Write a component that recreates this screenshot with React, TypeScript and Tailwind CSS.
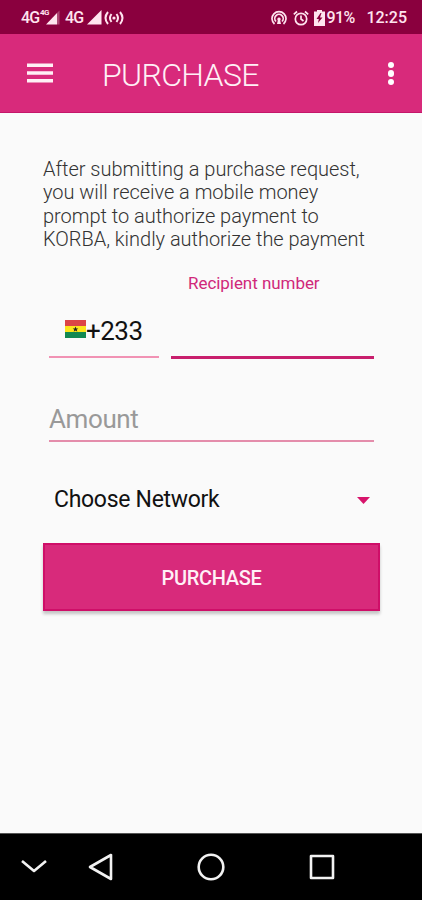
import type { ReactNode } from 'react';

const paragraph = [
  'After submitting a purchase request,',
  'you will receive a mobile money',
  'prompt to authorize payment to',
  'KORBA, kindly authorize the payment',
];

function StatusBar() {
  return (
    <div className="flex h-[34px] items-center justify-between bg-[#8a003e] pr-[15px] pl-[21px] text-[16px] leading-[18px] font-medium text-[#ffe4ef]">
      <div className="flex items-center pt-px">
        <span className="w-[19px] tracking-[-0.8px]">4G</span>
        <span className="w-[5px] self-start text-[8px] leading-[8px] font-bold tracking-[-0.5px] whitespace-nowrap">4G</span>
        <svg className="h-[15px] w-[15px]" viewBox="0 0 15 15" fill="currentColor">
          <path d="M1 14.5 12 3v11.500Z" />
          <path d="M12 3 14.500.5v14H12Z" opacity=".3" />
        </svg>
        <span className="ml-[5px] w-[21px] tracking-[-0.8px]">4G</span>
        <svg className="h-[15px] w-[16px]" viewBox="0 0 16 15" fill="currentColor">
          <path d="M1 14.500 15.500 0v14.500Z" />
        </svg>
        <svg className="ml-[2px] h-[14px] w-[20px]" viewBox="0 0 20 14" fill="none" stroke="currentColor" strokeWidth="2">
          <path d="M4 1Q-1 7 4 13M7.500 3Q4.500 7 7.500 11M16 1q5 6 0 12M12.500 3q3 4 0 8" />
          <circle cx="10" cy="7" r="1.600" fill="currentColor" stroke="none" />
        </svg>
      </div>

      <div className="flex items-center pt-px">
        <svg className="h-4 w-4" viewBox="0 0 16 16" fill="none" stroke="currentColor" strokeWidth="1.700">
          <path d="M3.500 14A7 7 0 1 1 12.500 14M5 11.500a4.200 4.200 0 1 1 6 0" />
          <path d="M8 7.500a1.700 1.700 0 0 1 1.200 2.900L10 14H6l.8-3.600A1.700 1.700 0 0 1 8 7.500Z" fill="currentColor" stroke="none" />
        </svg>
        <svg className="ml-[6px] h-4 w-4" viewBox="0 0 16 16" fill="none" stroke="currentColor" strokeWidth="1.700">
          <circle cx="8" cy="9" r="5.700" />
          <path d="M8 5.500V9l2.500 2M.8 4.300 4 1.500M15.200 4.300 12 1.500" />
        </svg>
        <svg className="ml-[5px] h-4 w-[11px]" viewBox="0 0 11 16">
          <path d="M0 1.500h3V0h5v1.500h3V16H0Z" fill="currentColor" />
          <path d="M6.500 3 2.500 9h2.300L4 13l4.500-5.500H6L7.500 3Z" fill="#8a003e" />
        </svg>
        <span className="ml-px w-[31px] tracking-[-0.5px]">91%</span>
        <span className="ml-[9px]">12:25</span>
      </div>
    </div>
  );
}

function AppBar() {
  return (
    <header className="flex h-[79px] items-center border-b border-[#c4166a] bg-[#d82a7b] pr-[28px] pl-[27px]">
      <svg className="h-5 w-[26px]" viewBox="0 0 26 20" fill="#fff0f6">
        <path d="M0 .5h26V4H0ZM0 8.200h26v3.500H0ZM0 16h26v3.500H0Z" />
      </svg>
      <h1 className="ml-[49px] pt-[3px] text-[32px] leading-[38px] font-light tracking-[-0.65px] text-[#fff0f6]">PURCHASE</h1>
      <div className="ml-auto flex flex-col gap-[2px] pt-px">
        <span className="size-[6.500px] rounded-full bg-white" />
        <span className="size-[6.500px] rounded-full bg-white" />
        <span className="size-[6.500px] rounded-full bg-white" />
      </div>
    </header>
  );
}

function GhanaFlag() {
  return (
    <svg className="h-[18px] w-[21px]" viewBox="0 0 21 18">
      <rect width="21" height="6" fill="#dc4547" />
      <rect y="6" width="21" height="6" fill="#fce51c" />
      <rect y="12" width="21" height="6" fill="#128951" />
      <path d="m10.500 6.500.8 1.900h2l-1.600 1.300.6 2-1.800-1.200-1.800 1.200.6-2-1.600-1.300h2Z" fill="#222" />
    </svg>
  );
}

function NavIcon({ className, children }: { className: string; children: ReactNode }) {
  return (
    <svg className={className} viewBox="0 0 28 28" fill="none" stroke="#f2f2f2" strokeWidth="2.600" strokeLinejoin="round">
      {children}
    </svg>
  );
}

export default function App() {
  return (
    <div className="flex h-[900px] w-[422px] flex-col overflow-hidden bg-[#fafafa] font-['Roboto',sans-serif]">
      <StatusBar />
      <AppBar />

      <main className="flex flex-1 flex-col pr-[42px] pl-[43px]">
        <p className="mt-[45px] text-[20px] leading-[23.300px] font-light tracking-[-0.03px] whitespace-nowrap text-[#333]">
          {paragraph.map((line) => (
            <span key={line} className="block">{line}</span>
          ))}
        </p>

        {/* Phone number */}
        <div className="mt-[21px] flex h-[87px] items-end px-[6px]">
          <div className="mb-px flex h-[38px] w-[110px] items-start border-b-2 border-[#f192b4] pl-[16px]">
            <GhanaFlag />
            <span className="text-[26px] leading-[22px] tracking-[-0.5px] text-[#111]">+233</span>
          </div>
          <div className="ml-[12px] h-full flex-1 border-b-[3px] border-[#c81f6d] pl-[17px]">
            <label className="text-[17px] leading-[20px] tracking-[-0.05px] whitespace-nowrap text-[#d0287a]">Recipient number</label>
          </div>
        </div>

        {/* Amount */}
        <div className="mx-[6px] mt-[43px] h-[40px] border-b-2 border-[#e48dab] text-[26px] leading-[35px] tracking-[-0.4px] text-[#999]">
          Amount
        </div>

        {/* Network select */}
        <div className="mt-[42px] flex h-[32px] items-center justify-between pr-[10px] pl-[11px] text-[23px] tracking-[-0.3px] text-[#111]">
          <span>Choose Network</span>
          <svg className="h-[7px] w-[13px]" viewBox="0 0 13 7">
            <path d="M0 0h13L6.500 7Z" fill="#d7146b" />
          </svg>
        </div>

        <button className="mt-[27px] h-[68px] border-2 border-[#cf0e68] bg-[#d82a7b] pt-[2px] text-[20px] font-medium tracking-[-0.3px] text-[#fff0f6] shadow-[0_3px_3px_rgba(0,0,0,0.22)]">
          PURCHASE
        </button>
      </main>

      <nav className="flex h-[67px] items-center border-t border-[#555] bg-black">
        <NavIcon className="ml-[20px] size-[28px]">
          <path d="m2 8 12 10L26 8" />
        </NavIcon>
        <NavIcon className="ml-[38px] size-[28px]">
          <path d="M25 2v24L4 14Z" />
        </NavIcon>
        <NavIcon className="ml-[83px] size-[28px]">
          <circle cx="14" cy="14" r="12.300" />
        </NavIcon>
        <NavIcon className="ml-[83px] size-[28px]">
          <path d="M3 3h22v22H3Z" />
        </NavIcon>
      </nav>
    </div>
  );
}
